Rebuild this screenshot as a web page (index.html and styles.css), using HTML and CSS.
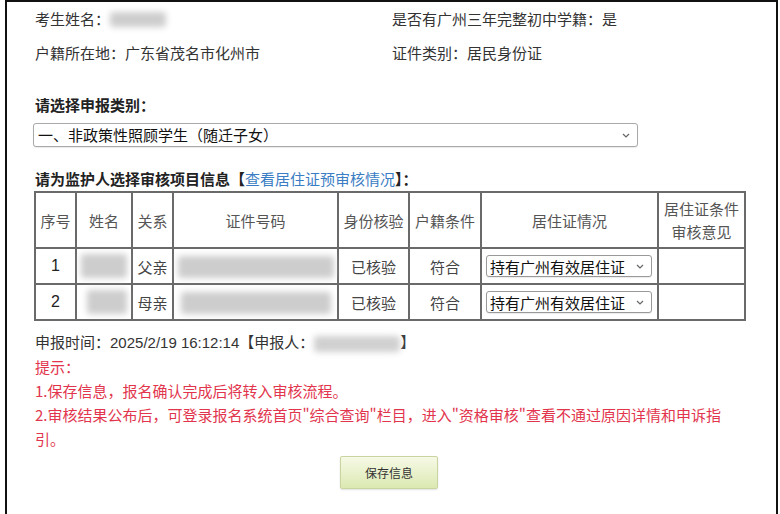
FILE: index.html
```html
<!DOCTYPE html>
<html lang="zh-CN">
<head>
<meta charset="utf-8">
<title>申报</title>
<link rel="stylesheet" href="styles.css">
</head>
<body>
<div class="page">
  <div class="info">
    <div class="info-item">考生姓名：<span class="blur blur-name"></span></div>
    <div class="info-item">是否有广州三年完整初中学籍：是</div>
    <div class="info-item">户籍所在地：广东省茂名市化州市</div>
    <div class="info-item">证件类别：居民身份证</div>
  </div>

  <div class="label bold">请选择申报类别：</div>
  <div class="select-wrap main-select">
    <select class="sel">
      <option>一、非政策性照顾学生（随迁子女）</option>
    </select>
    <svg class="chev" width="8" height="5" viewBox="0 0 8 5"><path d="M1 1 L4 4 L7 1" fill="none" stroke="#666" stroke-width="1.2"/></svg>
  </div>

  <div class="label bold heading">请为监护人选择审核项目信息【<a class="link" href="#">查看居住证预审核情况</a>】：</div>

  <table class="grid">
    <colgroup>
      <col style="width:41px"><col style="width:56px"><col style="width:41px"><col style="width:165px">
      <col style="width:71px"><col style="width:72px"><col style="width:177px"><col style="width:87px">
    </colgroup>
    <thead>
      <tr>
        <th>序号</th><th>姓名</th><th>关系</th><th>证件号码</th><th>身份核验</th><th>户籍条件</th><th>居住证情况</th><th>居住证条件审核意见</th>
      </tr>
    </thead>
    <tbody>
      <tr>
        <td class="num">1</td>
        <td><span class="blur blur-cell-name"></span></td>
        <td>父亲</td>
        <td><span class="blur blur-id"></span></td>
        <td>已核验</td>
        <td>符合</td>
        <td>
          <div class="select-wrap row-select">
            <select class="sel small"><option>持有广州有效居住证</option></select>
            <svg class="chev" width="8" height="5" viewBox="0 0 8 5"><path d="M1 1 L4 4 L7 1" fill="none" stroke="#666" stroke-width="1.2"/></svg>
          </div>
        </td>
        <td></td>
      </tr>
      <tr>
        <td class="num">2</td>
        <td><span class="blur blur-cell-name short"></span></td>
        <td>母亲</td>
        <td><span class="blur blur-id short"></span></td>
        <td>已核验</td>
        <td>符合</td>
        <td>
          <div class="select-wrap row-select">
            <select class="sel small"><option>持有广州有效居住证</option></select>
            <svg class="chev" width="8" height="5" viewBox="0 0 8 5"><path d="M1 1 L4 4 L7 1" fill="none" stroke="#666" stroke-width="1.2"/></svg>
          </div>
        </td>
        <td></td>
      </tr>
    </tbody>
  </table>

  <div class="line time">申报时间：<span class="arial">2025/2/19 16:12:14</span>【申报人：<span class="blur blur-reporter"></span>】</div>
  <div class="tips">
    <div class="line">提示：</div>
    <div class="line">1.保存信息，报名确认完成后将转入审核流程。</div>
    <div class="line">2.审核结果公布后，可登录报名系统首页"综合查询"栏目，进入"资格审核"查看不通过原因详情和申诉指引。</div>
  </div>

  <button class="save" type="button">保存信息</button>
</div>
</body>
</html>
```

FILE: styles.css
```css
html, body {
  margin: 0;
  padding: 0;
  background: #fff;
}

body {
  font-family: "Noto Sans CJK SC", "Liberation Sans", sans-serif;
  font-size: 15px;
  color: #333;
}

.page {
  margin-left: 5px;
  width: 773px;
  min-height: 514px;
  box-sizing: border-box;
  border: 2px solid #111;
  border-bottom: none;
  padding: 0 0 0 28px;
}

.info {
  display: grid;
  grid-template-columns: 357px 1fr;
}

.info-item {
  height: 34px;
  line-height: 34px;
  display: flex;
  align-items: center;
  white-space: nowrap;
}

.blur {
  display: inline-block;
  background: #cdcdcd;
  filter: blur(3px);
  border-radius: 3px;
}

.blur-name {
  width: 56px;
  height: 15px;
  margin-left: 0;
}

.label {
  line-height: 24px;
  margin-top: 23px;
}

.bold {
  font-weight: bold;
  color: #222;
}

.select-wrap {
  position: relative;
}

.main-select {
  margin-top: 6px;
  width: 605px;
  margin-left: -2px;
}

.sel {
  appearance: none;
  -webkit-appearance: none;
  width: 100%;
  height: 24px;
  border: 1px solid #a9a9a9;
  border-radius: 3px;
  background: #fff;
  font-family: "Noto Sans CJK SC", sans-serif;
  font-size: 15px;
  color: #111;
  padding: 0 4px;
  line-height: 22px;
  box-shadow: 0 1px 1px rgba(0,0,0,0.08);
}

.chev {
  position: absolute;
  right: 8px;
  top: 50%;
  margin-top: -2px;
  pointer-events: none;
}

.heading {
  margin-top: 20px;
}

.link {
  color: #3b7dc4;
  text-decoration: none;
  font-weight: normal;
}

.grid {
  margin-left: -1px;
  width: 710px;
  table-layout: fixed;
  border-collapse: collapse;
  color: #444;
}

.grid th,
.grid td {
  border: 2px solid #6a6a6a;
  padding: 0;
  text-align: center;
  vertical-align: middle;
  font-weight: normal;
}

.grid th {
  height: 54px;
  line-height: 23px;
  color: #555;
}

.grid td {
  height: 34px;
}

.num {
  font-family: "Liberation Sans", sans-serif;
  font-size: 16px;
  color: #222;
}

.blur-cell-name {
  width: 46px;
  height: 24px;
  vertical-align: middle;
}

.blur-cell-name.short {
  width: 40px;
  margin-left: 6px;
}

.blur-id {
  width: 156px;
  height: 22px;
  vertical-align: middle;
}

.blur-id.short {
  width: 150px;
}

.row-select {
  width: 166px;
  margin-left: 4px;
}

.sel.small {
  height: 22px;
  font-size: 15px;
  border-color: #999;
  padding: 0 3px;
  color: #111;
}

.line {
  line-height: 24px;
}

.time {
  margin-top: 9px;
  color: #333;
}

.arial {
  font-family: "Liberation Sans", sans-serif;
}

.blur-reporter {
  width: 86px;
  height: 16px;
  vertical-align: middle;
  background: #d0d0d0;
}

.tips {
  color: #e2354d;
  width: 690px;
}

.save {
  display: block;
  margin: 5px 0 0 305px;
  width: 98px;
  height: 33px;
  border: 1px solid #c8d5a0;
  border-radius: 2px;
  background: linear-gradient(#f6f9e6, #dce9b2);
  font-family: "Noto Sans CJK SC", sans-serif;
  font-size: 12px;
  color: #333;
  box-shadow: 0 1px 2px rgba(0,0,0,0.12);
}
```
